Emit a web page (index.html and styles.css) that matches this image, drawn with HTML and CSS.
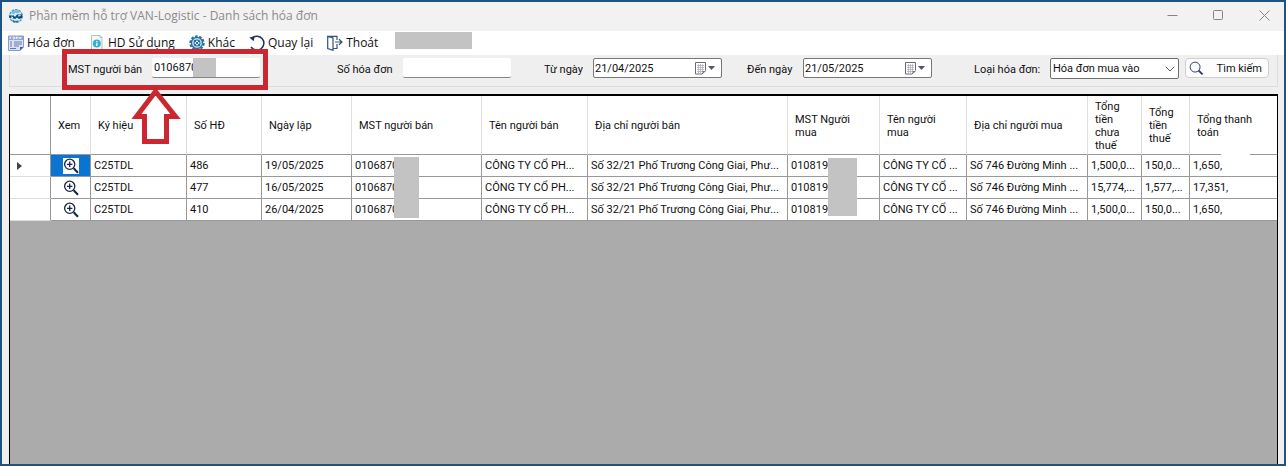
FILE: index.html
```html
<!DOCTYPE html>
<html lang="vi">
<head>
<meta charset="utf-8">
<title>Phần mềm hỗ trợ VAN-Logistic - Danh sách hóa đơn</title>
<link rel="stylesheet" href="styles.css">
</head>
<body>
<svg width="0" height="0" class="sprite" aria-hidden="true">
  <symbol id="zoom-in" viewBox="0 0 16 16">
    <g fill="none" stroke="#16244a">
      <circle cx="6.7" cy="6.3" r="5.1" stroke-width="1.3"/>
      <path d="M4 6.3h5.4M6.7 3.6v5.4" stroke-width="1.3"/>
      <path d="M10.6 10.2l4.4 4.6" stroke-width="2"/>
    </g>
  </symbol>
  <symbol id="calendar" viewBox="0 0 20 13">
    <path d="M.5 .5h10v8l-3.5 3.5h-6.500z" fill="#fff" stroke="#6d6a70"/>
    <path d="M2 3.500h7M2 5.500h7M2 7.500h7M2 9.500h5M3.500 2v9M5.500 2v9M7.500 2v8" stroke="#a9a9b2" stroke-width=".7"/>
    <path d="M7.500 12v-3h3.500z" fill="#77747c"/>
    <path d="M13 4h7l-3.500 4z" fill="#505866"/>
  </symbol>
</svg>
<div class="window">
  <header class="titlebar">
    <svg class="app-icon" viewBox="0 0 16 16" aria-hidden="true">
      <circle cx="8" cy="8" r="6.300" fill="#d5edf7" stroke="#4b9bc6" stroke-width="1.400" stroke-dasharray="2.500 1"/>
      <path d="M3 4.500c2-3 7-3.500 9.500-.5l-3 1.500-2-1-2 2z" fill="#78bddd"/>
      <path d="M.8 7.500h5l1.200 1.500 2-2.500h5.500l-.5 3.500-3 1-2-1.500-2 1.500-3-1H1.500z" fill="#174a78"/>
      <path d="M3 9l2 .5M10 8l2.500-.5" stroke="#fff"/>
      <path d="M4.500 12.500l2 1.200 4-.5" stroke="#257cab" stroke-width="1.500" fill="none"/>
    </svg>
    <h1 class="title">Phần mềm hỗ trợ VAN-Logistic - Danh sách hóa đơn</h1>
    <div class="controls">
      <button class="control" aria-label="Thu nhỏ"><svg viewBox="0 0 11 11"><path d="M.5 5.500h10"/></svg></button>
      <button class="control" aria-label="Phóng to"><svg viewBox="0 0 11 11"><rect x=".5" y=".5" width="9" height="9" rx="1"/></svg></button>
      <button class="control" aria-label="Đóng"><svg viewBox="0 0 11 11"><path d="M.5 .5l10 10M10.500 .5l-10 10"/></svg></button>
    </div>
  </header>

  <nav class="menu">
    <button class="menu-item">
      <svg viewBox="0 0 16 16"><path d="M.5 1h15v11l-3.500 3.500H.500z" fill="#d9e2f5" stroke="#8b9cc8"/><path d="M1 1h14v4H1z" fill="#8da2cf"/><path d="M2 4V2h1.500M2 3h1M5 2h1.500v2H5zM8 4V2h1.500v1H8l1.500 1M11 4V2l1 1.500L13 2v2" fill="none" stroke="#fff" stroke-width=".7"/><path d="M2 7h2M6 7h8M2 9h2M6 9h8M2 11h2M6 11h5M2 13.500h6" stroke="#6478b0"/><path d="M15.500 12H12v3.500z" fill="#415b9c"/></svg>
      <span>Hóa đơn</span></button>
    <button class="menu-item">
      <svg viewBox="0 0 16 16"><path d="M2.500 .5h8.500l2 2v13H2.500z" fill="#f4fafb" stroke="#a5c4cb"/><path d="M11 .5v2h2" fill="none" stroke="#a5c4cb"/><circle cx="7.800" cy="8.500" r="4" fill="#36afd0"/><path d="M7.800 8v3M7.800 6v1.200" stroke="#fff" stroke-width="1.300"/></svg>
      <span>HD Sử dụng</span></button>
    <button class="menu-item">
      <svg viewBox="0 0 16 16"><circle cx="8" cy="8" r="6.700" fill="none" stroke="#2c6d9e" stroke-width="2" stroke-dasharray="2.600 1.600"/><circle cx="8" cy="8" r="5.600" fill="#a8d5ec" stroke="#286b9c" stroke-width="1.200"/><circle cx="8" cy="8" r="3" fill="#dff2fa" stroke="#286b9c"/><path d="M5.500 10.500l5-5M5 5l6 6" stroke="#286b9c"/></svg>
      <span>Khác</span></button>
    <button class="menu-item">
      <svg viewBox="0 0 16 16"><path d="M3.200 2.900A7 7 0 1 1 2 12" fill="none" stroke="#1d3457" stroke-width="1.500"/><path d="M.3 2.400l5.200-.8-.8 4.600z" fill="#1d3457"/></svg>
      <span>Quay lại</span></button>
    <button class="menu-item">
      <svg viewBox="0 0 16 16"><path d="M.7 1.300L6 3v12.300L.7 13.500zM.7 1.300H10V5M10 9v4.500H6M8 7h6.500M12 4.200L15 7l-3 2.800" fill="none" stroke="#33517c" stroke-width="1.200"/></svg>
      <span>Thoát</span></button>
    <span class="redacted redacted--user"></span>
  </nav>

  <form class="filters">
    <div class="field field--seller">
      <label for="seller">MST người bán</label>
      <div class="entry"><input id="seller" class="text" value="0106870"><span class="redacted redacted--seller"></span></div>
    </div>
    <div class="field field--number">
      <label for="number">Số hóa đơn</label>
      <div class="entry"><input id="number" class="text"></div>
    </div>
    <div class="field field--from">
      <label for="from">Từ ngày</label>
      <div class="date"><input id="from" value="21/04/2025"><button type="button" aria-label="Chọn từ ngày"><svg><use href="#calendar"/></svg></button></div>
    </div>
    <div class="field field--to">
      <label for="to">Đến ngày</label>
      <div class="date"><input id="to" value="21/05/2025"><button type="button" aria-label="Chọn đến ngày"><svg><use href="#calendar"/></svg></button></div>
    </div>
    <div class="field field--kind">
      <label for="kind">Loại hóa đơn:</label>
      <div class="select"><select id="kind"><option>Hóa đơn mua vào</option></select><svg viewBox="0 0 10 6"><path d="M.7 .7L5 5 9.300 .7"/></svg></div>
    </div>
    <button type="button" class="search"><svg viewBox="0 0 16 16"><circle cx="6.500" cy="6.500" r="5.300"/><path d="M10.300 10.300l4.200 4" stroke-width="2"/></svg><span>Tìm kiếm</span></button>
    <svg class="callout" viewBox="0 0 206 96" aria-hidden="true">
      <rect x="2.500" y="2.500" width="201" height="36"/>
      <path d="M93.500 42.500L74.500 67.500H82.500V92.500H104.500V67.500H113.500Z"/>
    </svg>
  </form>

  <main class="grid">
    <table>
      <colgroup><col class="c-mark"><col class="c-view"><col class="c-sign"><col class="c-no"><col class="c-date"><col class="c-seller"><col class="c-sname"><col class="c-saddr"><col class="c-buyer"><col class="c-bname"><col class="c-baddr"><col class="c-net"><col class="c-tax"><col class="c-total"></colgroup>
      <thead>
        <tr><th></th><th>Xem</th><th>Ký hiệu</th><th>Số HĐ</th><th>Ngày lập</th><th>MST người bán</th><th>Tên người bán</th><th>Địa chỉ người bán</th><th>MST Người<br>mua</th><th>Tên người<br>mua</th><th>Địa chỉ người mua</th><th>Tổng tiền chưa thuế</th><th>Tổng tiền thuế</th><th class="total">Tổng thanh<br>toán</th></tr>
      </thead>
      <tbody>
        <tr><td class="mark"><svg viewBox="0 0 5 8"><path d="M0 0l5 4-5 4z" fill="#444"/></svg></td><td class="view view--on"><button aria-label="Xem 486"><svg><use href="#zoom-in"/></svg></button></td><td>C25TDL</td><td>486</td><td>19/05/2025</td><td class="masked">0106870<span class="redacted redacted--sellers"></span></td><td>CÔNG TY CỔ PH...</td><td>Số 32/21 Phố Trương Công Giai, Phư...</td><td class="masked">010819<span class="redacted redacted--buyers"></span></td><td>CÔNG TY CỔ ...</td><td>Số 746 Đường Minh ...</td><td>1,500,0...</td><td>150,0...</td><td>1,650,</td></tr>
        <tr><td class="mark"></td><td class="view"><button aria-label="Xem 477"><svg><use href="#zoom-in"/></svg></button></td><td>C25TDL</td><td>477</td><td>16/05/2025</td><td>0106870</td><td>CÔNG TY CỔ PH...</td><td>Số 32/21 Phố Trương Công Giai, Phư...</td><td>010819</td><td>CÔNG TY CỔ ...</td><td>Số 746 Đường Minh ...</td><td>15,774,...</td><td>1,577,...</td><td>17,351,</td></tr>
        <tr><td class="mark"></td><td class="view"><button aria-label="Xem 410"><svg><use href="#zoom-in"/></svg></button></td><td>C25TDL</td><td>410</td><td>26/04/2025</td><td>0106870</td><td>CÔNG TY CỔ PH...</td><td>Số 32/21 Phố Trương Công Giai, Phư...</td><td>010819</td><td>CÔNG TY CỔ ...</td><td>Số 746 Đường Minh ...</td><td>1,500,0...</td><td>150,0...</td><td>1,650,</td></tr>
      </tbody>
    </table>
  </main>
</div>
</body>
</html>
```
FILE: styles.css
```css
* { box-sizing: border-box; }

body {
  margin: 0;
  font: 11px/13px Roboto, "Liberation Sans", sans-serif;
  color: #111;
}

button, input, select {
  margin: 0;
  padding: 0;
  border: 0;
  background: none;
  font: inherit;
  color: inherit;
  outline: 0;
}

svg { display: block; flex: none; }
.sprite { position: absolute; }

.window {
  display: flex;
  flex-direction: column;
  min-height: 100vh;
  border: 2px solid #1d5480;
  background: #efefef;
}

/* Title bar */
.titlebar {
  display: flex;
  align-items: center;
  height: 29px;
  padding: 0 8px 2px 6px;
  background: #f2f2f2;
}
.app-icon { width: 16px; height: 16px; }
.title {
  flex: 1;
  margin: 0 0 0 5px;
  font: 12px/16px "Open Sans", sans-serif;
  color: #8b8b8b;
}
.controls { display: flex; gap: 22px; }
.control { display: grid; place-items: center; width: 24px; height: 24px; }
.control svg { width: 11px; height: 11px; fill: none; stroke: #858585; }

/* Menu */
.menu {
  display: flex;
  align-items: center;
  gap: 14px;
  height: 24px;
  padding-left: 6px;
  background: #fff;
}
.menu-item {
  display: flex;
  align-items: center;
  gap: 3px;
  font: 12px/16px "Open Sans", sans-serif;
  white-space: nowrap;
}
.menu-item svg { width: 16px; height: 16px; }

.redacted { background: #c3c3c3; }
.redacted--user { width: 77px; height: 17px; margin: 0 0 6px 3px; }

/* Filters */
.filters {
  position: relative;
  display: grid;
  grid-template-columns: 269fr 207fr 203fr 227fr 211fr 84fr;
  align-items: start;
  height: 32px;
  margin: 0 6px 7px 7px;
  padding: 3px 8px 0 58px;
  border: 1px solid #dcdcdc;
  border-top: 0;
}
.field { display: flex; align-items: center; height: 20px; }
.field label { flex: none; white-space: nowrap; padding-top: 2px; }
.field--seller label { width: 84px; }
.field--number label { width: 66px; }
.field--from label { width: 49px; }
.field--to label { width: 56px; }
.field--kind label { width: 76px; }
.entry { position: relative; width: 108px; height: 20px; }
.text {
  width: 100%;
  height: 20px;
  padding: 0 2px 1px;
  border-bottom: 1px solid #858585;
  border-radius: 2px;
  background: #fff;
}
.date {
  display: flex;
  align-items: center;
  width: 129px;
  height: 20px;
  padding: 0 6px 0 1px;
  border: 1px solid #777;
  border-radius: 2px;
  background: #fff;
}
.date input { flex: 1; min-width: 0; }
.date svg { width: 20px; height: 13px; }
.select { position: relative; width: 129px; height: 21px; }
.select select {
  width: 100%;
  height: 21px;
  padding: 0 2px;
  border: 1px solid #707070;
  border-radius: 2px;
  background: #fff;
  appearance: none;
}
.select svg {
  position: absolute;
  right: 4px;
  top: 8px;
  width: 10px;
  height: 6px;
  fill: none;
  stroke: #555;
  pointer-events: none;
}
.search {
  display: flex;
  align-items: center;
  justify-content: space-between;
  height: 20px;
  padding: 0 6px 0 3px;
  border: 1px solid #cfcfcf;
  border-radius: 4px;
  background: #fdfdfd;
  white-space: nowrap;
}
.search svg { width: 15px; height: 15px; fill: none; stroke: #26395e; }
.redacted--seller { position: absolute; left: 41px; top: 0; width: 23px; height: 19px; }
.callout {
  position: absolute;
  z-index: 2;
  left: 52px;
  top: -6px;
  width: 206px;
  height: 96px;
  fill: none;
  stroke: #ca2731;
  stroke-width: 5;
  pointer-events: none;
}

/* Invoice table */
.grid {
  flex: 1;
  margin: 0 6px 0 7px;
  border: 1px solid #000;
  border-top-width: 2px;
  border-bottom: 0;
  background: #ababab;
}
table { width: 100%; table-layout: fixed; border-spacing: 0; }
.c-mark { width: 41px; }
.c-view { width: 40px; }
.c-sign { width: 96px; }
.c-no { width: 75px; }
.c-date { width: 90px; }
.c-seller { width: 130px; }
.c-sname { width: 106px; }
.c-saddr { width: 200px; }
.c-buyer { width: 92px; }
.c-bname { width: 87px; }
.c-baddr { width: 121px; }
.c-net { width: 54px; }
.c-tax { width: 48px; }
th {
  height: 59px;
  padding: 1px 7px 0;
  border-right: 1px solid #dedede;
  border-bottom: 1px solid #999;
  background: #fff;
  font-weight: normal;
  text-align: left;
}
th:first-child { border-right-color: #999; }
td {
  height: 22px;
  padding: 0 0 0 3px;
  border-right: 1px solid #999;
  border-bottom: 1px solid #999;
  background: #fff;
  white-space: nowrap;
}
th:last-child, td:last-child { border-right: 0; }
.mark { padding-left: 7px; border-bottom-color: #ddd; }
.mark svg { width: 5px; height: 8px; }
.view { padding: 0; }
.view button { display: block; width: 16px; height: 16px; margin: 0 auto; background: #fff; }
.view svg { width: 16px; height: 16px; }
.view--on { background: #0b74d1; }
.masked, .total { position: relative; }
.redacted--sellers { position: absolute; z-index: 1; left: 42px; top: 2px; width: 25px; height: 61px; }
.redacted--buyers { position: absolute; z-index: 1; left: 40px; top: 3px; width: 29px; height: 58px; }
.total::after {
  content: "";
  position: absolute;
  left: 31px;
  bottom: -6px;
  width: 29px;
  height: 10px;
  background: #fff;
}
```
